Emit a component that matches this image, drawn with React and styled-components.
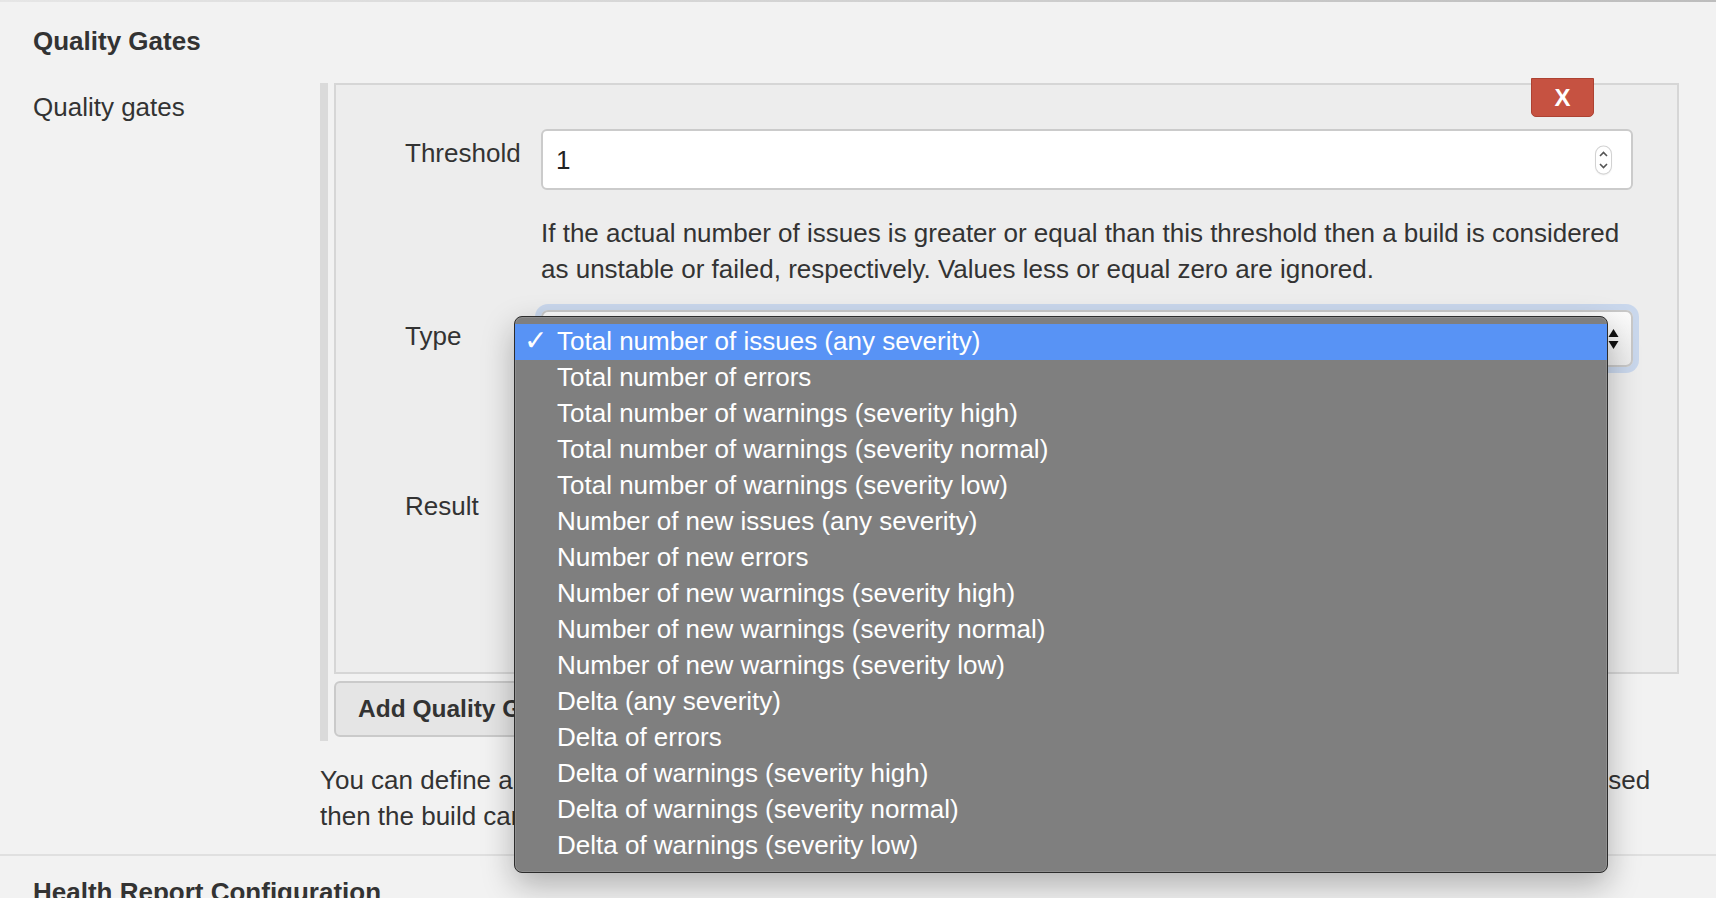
import styled, { createGlobalStyle } from "styled-components";

const GlobalStyle = createGlobalStyle`
  html, body {
    margin: 0;
    padding: 0;
    background: #f2f2f2;
  }
  body {
    font-family: "Liberation Sans", Helvetica, Arial, sans-serif;
    font-size: 26px;
    line-height: 36px;
    color: #333;
  }
`;

const Page = styled.div`
  width: 1716px;
  height: 898px;
  overflow: hidden;
`;

const TopRule = styled.div`
  height: 2px;
  background: linear-gradient(to right, #e6e6e6, #bdbdbd);
`;

const SectionTitle = styled.h2`
  margin: ${(p) => p.$top}px 0 0 33px;
  font-size: 26px;
  line-height: 36px;
  font-weight: bold;
  color: #333;
`;

const FormRow = styled.div`
  display: grid;
  grid-template-columns: 287px 1fr;
  margin: 24px 37px 0 33px;
`;

const RowLabel = styled.div`
  padding-top: 6px;
`;

const RowBody = styled.div`
  display: flex;
  flex-direction: column;
`;

const Repeated = styled.div`
  border-left: 8px solid #dadada;
  padding: 0 0 4px 6px;
  display: flex;
  flex-direction: column;
  align-items: flex-start;
`;

const Chunk = styled.div`
  position: relative;
  align-self: stretch;
  background: #ededed;
  border: 2px solid #d6d6d6;
  padding: 44px 44px 135px 69px;
  display: grid;
  grid-template-columns: 136px 1fr;
`;

const DeleteButton = styled.button`
  position: absolute;
  top: -7px;
  right: 83px;
  width: 63px;
  height: 39px;
  padding: 0;
  border: 1px solid #ad4232;
  border-radius: 0 0 5px 5px;
  background: #c65241;
  color: #fff;
  font-family: inherit;
  font-size: 24px;
  font-weight: bold;
  line-height: 36px;
`;

const FieldLabel = styled.div`
  margin-top: ${(p) => p.$top || 0}px;
  padding-top: ${(p) => p.$pad}px;
`;

const FieldCell = styled.div`
  position: relative;
  margin-top: ${(p) => p.$top || 0}px;
`;

const TextBox = styled.div`
  position: relative;
  height: 61px;
  box-sizing: border-box;
  border: 2px solid #cbcbcb;
  border-radius: 6px;
  background: #fff;
  display: flex;
  align-items: center;
  padding-left: 13px;
  color: #222;
`;

const Spinner = styled.span`
  position: absolute;
  right: 20px;
  top: 50%;
  transform: translateY(-50%);
  width: 15px;
  height: 27px;
  border-radius: 8px;
  background: #fff;
  box-shadow: 0 0 0 1px #d2d2d2, 0 1px 2px rgba(0, 0, 0, 0.2);
  display: flex;
  align-items: center;
  justify-content: center;
`;

const HelpText = styled.div`
  margin-top: ${(p) => p.$top}px;
  color: #333;
  white-space: nowrap;
`;

const SelectBox = styled.div`
  position: relative;
  height: 57px;
  width: ${(p) => p.$width || "auto"};
  box-sizing: border-box;
  border: 2px solid #c8c8c8;
  border-radius: 7px;
  background: linear-gradient(#fbfbfb, #ececec);
  box-shadow: ${(p) => (p.$focused ? "0 0 0 6px #c9d7ec" : "none")};
  display: flex;
  align-items: center;
  padding-left: 16px;
`;

const SelectArrows = styled.span`
  position: absolute;
  right: 12px;
  top: 50%;
  transform: translateY(-50%);
  display: flex;
`;

const Menu = styled.ul`
  position: absolute;
  left: -27px;
  top: 6px;
  z-index: 10;
  width: 1094px;
  box-sizing: border-box;
  margin: 0;
  padding: 7px 0 8px;
  list-style: none;
  background: #7f7f7f;
  border: 1px solid #2c2c2c;
  border-radius: 8px;
  box-shadow: inset 0 0 0 1px rgba(255, 255, 255, 0.12), 0 12px 32px rgba(0, 0, 0, 0.28);
`;

const MenuItem = styled.li`
  position: relative;
  height: 36px;
  line-height: 35px;
  padding-left: 42px;
  color: #fff;
  font-size: 26px;
  background: ${(p) => (p.$active ? "#5893f5" : "transparent")};
`;

const Check = styled.span`
  position: absolute;
  left: 9px;
  top: -1px;
  font-family: "DejaVu Sans", sans-serif;
  font-size: 28px;
  font-weight: bold;
`;

const AddButton = styled.button`
  margin-top: 7px;
  height: 56px;
  padding: 0 22px;
  border: 2px solid #cacaca;
  border-radius: 6px;
  background: #e5e5e5;
  color: #333;
  font-family: inherit;
  font-size: 24.5px;
  font-weight: bold;
`;

const Divider = styled.div`
  height: 2px;
  margin-top: 20px;
  background: #e0e0e0;
`;

const types = [
  "Total number of issues (any severity)",
  "Total number of errors",
  "Total number of warnings (severity high)",
  "Total number of warnings (severity normal)",
  "Total number of warnings (severity low)",
  "Number of new issues (any severity)",
  "Number of new errors",
  "Number of new warnings (severity high)",
  "Number of new warnings (severity normal)",
  "Number of new warnings (severity low)",
  "Delta (any severity)",
  "Delta of errors",
  "Delta of warnings (severity high)",
  "Delta of warnings (severity normal)",
  "Delta of warnings (severity low)",
];

const SpinIcon = () => (
  <svg width="9" height="21" viewBox="0 0 9 21" fill="none" stroke="#555" strokeWidth="1.6">
    <path d="M1 6.5 L4.5 3 L8 6.5" />
    <path d="M1 14.5 L4.5 18 L8 14.5" />
  </svg>
);

const ArrowsIcon = () => (
  <svg width="11" height="24" viewBox="0 0 11 24">
    <path d="M0.5 10 L5.5 2 L10.5 10 Z" fill="#111" />
    <path d="M0.5 14 L5.5 22 L10.5 14 Z" fill="#111" />
  </svg>
);

export default function App() {
  return (
    <Page>
      <GlobalStyle />
      <TopRule />
      <SectionTitle $top={21}>Quality Gates</SectionTitle>
      <FormRow>
        <RowLabel>Quality gates</RowLabel>
        <RowBody>
          <Repeated>
            <Chunk>
              <DeleteButton>X</DeleteButton>

              <FieldLabel $pad={6}>Threshold</FieldLabel>
              <FieldCell>
                <TextBox>
                  1
                  <Spinner>
                    <SpinIcon />
                  </Spinner>
                </TextBox>
                <HelpText $top={25}>
                  If the actual number of issues is greater or equal than this threshold then a build is considered
                  <br />
                  as unstable or failed, respectively. Values less or equal zero are ignored.
                </HelpText>
              </FieldCell>

              <FieldLabel $top={23} $pad={8}>Type</FieldLabel>
              <FieldCell $top={23}>
                <SelectBox $focused>
                  {types[0]}
                  <SelectArrows>
                    <ArrowsIcon />
                  </SelectArrows>
                </SelectBox>
                <Menu>
                  {types.map((t, i) => (
                    <MenuItem key={t} $active={i === 0}>
                      {i === 0 && <Check>✓</Check>}
                      {t}
                    </MenuItem>
                  ))}
                </Menu>
              </FieldCell>

              <FieldLabel $top={113} $pad={8}>Result</FieldLabel>
              <FieldCell $top={113}>
                <SelectBox $width="300px">
                  Unstable
                  <SelectArrows>
                    <ArrowsIcon />
                  </SelectArrows>
                </SelectBox>
              </FieldCell>
            </Chunk>
            <AddButton>Add Quality Gate</AddButton>
          </Repeated>
          <HelpText $top={21}>
            You can define an arbitrary number of quality gates here. If at least one of all defined quality gates has been passed
            <br />
            then the build can be set to unstable or failed, respectively.
          </HelpText>
        </RowBody>
      </FormRow>
      <Divider />
      <SectionTitle $top={18}>Health Report Configuration</SectionTitle>
    </Page>
  );
}
